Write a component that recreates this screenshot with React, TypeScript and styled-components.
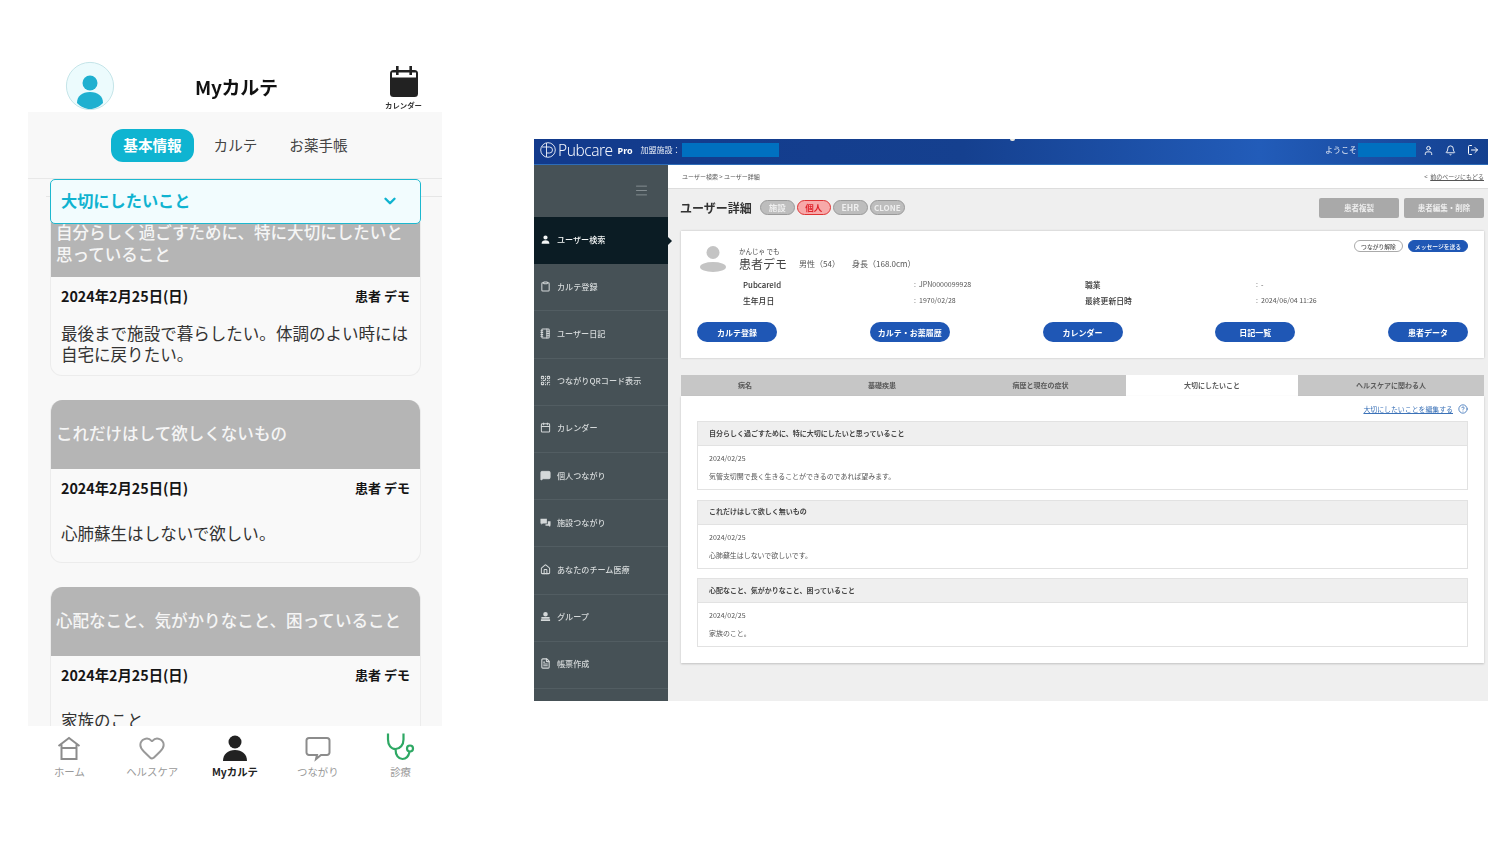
import React from "react";
import styled, { createGlobalStyle } from "styled-components";
import { Clipboard, NotebookTabs, QrCode, Calendar, MessageSquare, Home, User, Bell, LogOut, FileText, Heart, HelpCircle, Menu, ChevronDown } from "lucide-react";

const Global = createGlobalStyle`
  html, body { margin: 0; padding: 0; background: #fff; }
  body { font-family: "Noto Sans CJK JP", "Noto Sans", sans-serif; }
  * { box-sizing: border-box; }
`;

const Canvas = styled.div`
  width: 1510px; height: 853px; overflow: hidden; display: flex; align-items: flex-start;
  padding-left: 28px; gap: 92px;
`;

/* ---------- phone ---------- */
const Phone = styled.section`
  width: 414px; margin-top: 60px; display: flex; flex-direction: column; filter: blur(0.25px);
`;
const PhoneHeader = styled.header`
  height: 52px; display: flex; align-items: center; justify-content: space-between; padding: 0 20px 0 37px; position: relative;
`;
const PhoneTitle = styled.h1`
  position: absolute; left: 167px; top: 15px; margin: 0; font-size: 19px; line-height: 24px; font-weight: 700; color: #111; font-family: "Noto Sans CJK JP", sans-serif; letter-spacing: -0.3px;
`;
const CalendarBox = styled.div`
  display: flex; flex-direction: column; align-items: center; gap: 1px; padding-top: 4px;
  font-size: 7.4px; line-height: 12px; font-weight: 700; color: #333; white-space: nowrap;
`;
const PhoneBody = styled.div`
  height: 614px; background: #f8f8f8; overflow: hidden;
`;
const SegBar = styled.div`
  height: 67px; border-bottom: 1px solid #e8e8e8; display: flex; gap: 0; padding: 17px 0 0 83px; align-items: flex-start;
`;
const Seg = styled.div<{ $on?: boolean; $w: number }>`
  width: ${p => p.$w}px; height: 33px; border-radius: 12px; display: flex; align-items: center; justify-content: center; padding-bottom: 2px;
  font-size: 14.6px; font-weight: ${p => (p.$on ? 700 : 400)}; color: ${p => (p.$on ? "#fff" : "#444")};
  background: ${p => (p.$on ? "#0fb4d1" : "transparent")};
`;
const Scroll = styled.div`
  position: relative; padding: 0 21px 0 22px;
  &::before { content: ""; position: absolute; left: 18px; right: 0; top: 17px; height: 1px; background: #e6e6e6; }
`;
const Dropdown = styled.div`
  position: relative; height: 45px; background: #f2fcfe; border: 1.5px solid #1db8cf; border-radius: 5px;
  display: flex; align-items: center; justify-content: space-between; padding: 0 21px 3px 10px;
  font-size: 16.2px; font-weight: 700; color: #10b3d0; margin-bottom: -2px; z-index: 1;
  svg { margin-top: 2px; }
`;
const MCard = styled.article<{ $first?: boolean; $h: number }>`
  height: ${p => p.$h}px; border: 1px solid #ececec; border-top: 0; margin: 0 0 24px; background: #f9f9f9;
  border-radius: ${p => (p.$first ? "0 0 12px 12px" : "12px")}; overflow: hidden;
`;
const MHead = styled.div<{ $h: number; $first?: boolean }>`
  height: ${p => p.$h}px; background: #b5b5b5; color: #f5f5f5; font-size: 16.55px; line-height: 21.5px; font-weight: 500;
  display: flex; align-items: ${p => (p.$first ? "flex-start" : "center")}; padding: 0 4px 2px 5px;
`;
const MMeta = styled.div`
  display: flex; justify-content: space-between; align-items: center; padding: 10px 10px 0; line-height: 18px; font-weight: 700; color: #151515;
  font-family: "Noto Sans CJK JP", sans-serif; font-size: 14.3px;
`;
const MAuthor = styled.span`
  font-size: 13px;
`;
const MText = styled.p<{ $top: number }>`
  margin: ${p => p.$top}px 0 0; padding: 0 6px 0 10px; font-size: 16.55px; line-height: 21px; color: #333;
`;
const TabNav = styled.nav`
  height: 64px; display: grid; grid-template-columns: repeat(5, 1fr); background: #fff;
`;
const NavItem = styled.div<{ $on?: boolean }>`
  display: flex; flex-direction: column; align-items: center; padding-top: 8px; height: 64px;
  font-size: 10.4px; line-height: 14px; color: ${p => (p.$on ? "#222" : "#999")}; font-weight: ${p => (p.$on ? 700 : 400)}; white-space: nowrap;
  svg { height: 28px; margin-bottom: 3px; }
`;
const Stethoscope = styled.svg`
  && { margin-top: -1px; margin-bottom: 4px; }
`;

/* ---------- desktop ---------- */
const Desktop = styled.section`
  width: 954px; height: 562px; margin-top: 139px; display: flex; flex-direction: column; background: #efefef; filter: blur(0.3px);
`;
const TopBar = styled.header`
  height: 26px; flex: none; position: relative; display: flex; align-items: center; padding: 0 9px 3px 6px; color: #fff;
  background: linear-gradient(90deg, #123a8c 0%, #15408f 45%, #225cb9 76%, #14408f 100%);
  border-bottom: 1px solid #2d6cb8;
  &::after { content: ""; position: absolute; left: 476px; top: 0; width: 5px; height: 2px; border-radius: 0 0 3px 3px; background: #e8e8e0; }
`;
const Brand = styled.div`
  font-size: 15.5px; font-weight: 300; letter-spacing: -0.45px; margin: 0 5px 0 2px; line-height: 20px; font-family: "Noto Sans", sans-serif; color: #f2f5fb;
`;
const BrandPro = styled.span`
  font-size: 9px; font-weight: 700; font-family: "Noto Sans", sans-serif; margin-right: 8px;
`;
const TopLabel = styled.span`
  font-size: 8px; white-space: nowrap; color: #e6ebf5; padding-bottom: 1px;
`;
const Mask = styled.span<{ $w: number }>`
  width: ${p => p.$w}px; height: 14px; background: #0070c0; display: block; margin-left: 1px;
`;
const TopRight = styled.div`
  margin-left: auto; display: flex; align-items: center; gap: 0;
  svg { margin-left: 11px; }
  span + svg { margin-left: 7px; }
`;
const Split = styled.div`
  flex: 1; display: flex; min-height: 0;
`;
const Side = styled.aside`
  width: 134px; background: #465156; flex: none; display: flex; flex-direction: column;
`;
const Burger = styled.div`
  height: 52px; display: flex; align-items: center; justify-content: flex-end; padding: 0 19px 2px 0; color: #8d9699;
`;
const SideItem = styled.div<{ $on?: boolean }>`
  height: 47.2px; flex: none; position: relative; display: flex; align-items: center; gap: 6px; padding: 0 0 ${p => (p.$on ? 3 : 2)}px 6px;
  font-size: 8.1px; font-weight: 500; white-space: nowrap;
  color: ${p => (p.$on ? "#f4f6f6" : "#d4d8d9")};
  background: ${p => (p.$on ? "#0b1c24" : "transparent")};
  border-bottom: ${p => (p.$on ? "0" : "1px solid #525d62")};
  ${p => p.$on && `&::after { content: ""; position: absolute; right: -4px; top: 20px; border-left: 4px solid #0b1c24; border-top: 4px solid transparent; border-bottom: 4px solid transparent; }`}
  svg { width: 11px; height: 11px; flex: none; }
`;
const Main = styled.main`
  flex: 1; display: flex; flex-direction: column; min-width: 0;
`;
const Crumbs = styled.div`
  height: 24px; flex: none; background: #fff; border-bottom: 1px solid #ddd; display: flex; align-items: center; justify-content: space-between;
  padding: 0 4px 0 14px; font-size: 6px; color: #555;
`;
const BackLink = styled.span`
  text-decoration: underline;
`;
const Content = styled.div`
  padding: 0 4px 0 13px; display: flex; flex-direction: column;
`;
const TitleRow = styled.div`
  height: 42px; display: flex; align-items: center; padding-bottom: 5px;
`;
const PageTitle = styled.h2`
  margin: 0 8px 0 -1px; font-size: 12px; font-weight: 700; color: #333; line-height: 16px;
`;
const Badge = styled.span<{ $red?: boolean; $w: number; $size?: number }>`
  width: ${p => p.$w}px; height: 15px; border-radius: 8px; margin-right: 2px; display: flex; align-items: center; justify-content: center;
  font-size: ${p => p.$size ?? 8.5}px; font-weight: 700; font-family: "Noto Sans CJK JP", sans-serif; padding-bottom: 1px;
  color: ${p => (p.$red ? "#e0232b" : "#eee")}; background: ${p => (p.$red ? "#f7a9a9" : "#bdbdbd")}; border: 1px solid ${p => (p.$red ? "#d33" : "#9a9a9a")};
`;
const GreyBtn = styled.div<{ $gap?: boolean }>`
  width: 80px; height: 20px; border-radius: 2px; background: #a9a9a9; color: #eee; font-size: 7.5px; font-weight: 700; display: flex; align-items: center; justify-content: center;
  margin-left: ${p => (p.$gap ? "auto" : "5px")};
`;
const Card = styled.div`
  height: 127px; background: #fff; box-shadow: 0 0 2px rgba(0,0,0,.22); padding: 8px 16px 0; position: relative;
`;
const PersonRow = styled.div`
  height: 33px; display: flex; align-items: flex-end; padding-left: 3px;
`;
const NameBox = styled.div`
  margin-left: 13px; display: flex; flex-direction: column; color: #444; padding-bottom: 1px;
`;
const Kana = styled.span`
  font-size: 6.5px; line-height: 8px; margin-bottom: 1px;
`;
const Name = styled.span`
  font-size: 12px; line-height: 15px; color: #444;
`;
const Attr = styled.span<{ $w: number; $first?: boolean }>`
  font-size: 8px; line-height: 15px; color: #555; width: ${p => p.$w}px; white-space: nowrap; padding-bottom: 1px; height: 16px;
  margin-left: ${p => (p.$first ? "12px" : "0")};
`;
const Actions = styled.div`
  position: absolute; right: 16px; top: 9px; display: flex; gap: 5px;
`;
const SmallBtn = styled.span<{ $solid?: boolean; $w: number }>`
  width: ${p => p.$w}px; height: 12px; border-radius: 6px; font-size: 5.8px; display: flex; align-items: center; justify-content: center; font-weight: 500;
  color: ${p => (p.$solid ? "#fff" : "#555")}; background: ${p => (p.$solid ? "#1f57b5" : "#fff")}; border: 1px solid ${p => (p.$solid ? "#1f57b5" : "#aaa")};
`;
const InfoGrid = styled.dl`
  margin: 4px 0 0 46px; display: grid; grid-template-columns: 171px 171px 171px 1fr; grid-auto-rows: 16px; align-items: center;
`;
const Dt = styled.dt`
  font-size: 7.8px; font-weight: 500; color: #333;
`;
const Dd = styled.dd`
  margin: 0; font-size: 7px; color: #555;
`;
const BtnRow = styled.div`
  margin-top: 14px; display: flex; justify-content: space-between;
`;
const BlueBtn = styled.div`
  width: 80px; height: 20px; border-radius: 10px; background: #1f57b5; color: #fff; font-size: 8px; font-weight: 700; display: flex; align-items: center; justify-content: center;
`;
const Tabs = styled.div`
  margin-top: 17px; height: 21px; display: grid; grid-template-columns: 128px 146px 171px 172px 1fr; background: #c6c6c6;
`;
const TabCell = styled.div<{ $on?: boolean }>`
  display: flex; align-items: center; justify-content: center; font-size: 7px; font-weight: 700; color: #5a5a5a; padding-bottom: 1px;
  background: ${p => (p.$on ? "#fff" : "transparent")};
`;
const Panel = styled.div`
  background: #fff; height: 267px; padding: 0 16px; box-shadow: 0 1px 2px rgba(0,0,0,.2);
`;
const EditRow = styled.div`
  height: 25px; display: flex; align-items: center; justify-content: flex-end; gap: 5px; color: #3b72b8; font-size: 6.9px;
  span { text-decoration: underline; }
`;
const Section = styled.div`
  border: 1px solid #e2e2e2; height: 69px; margin-bottom: 9.5px; display: flex; flex-direction: column;
`;
const SecHead = styled.div`
  height: 24px; flex: none; background: #efefef; border-bottom: 1px solid #e2e2e2; display: flex; align-items: center; padding: 0 0 2px 11px; font-size: 7px; font-weight: 700; color: #444;
`;
const SecDate = styled.div`
  padding: 8px 0 0 11px; font-size: 7px; line-height: 9px; color: #555;
`;
const SecText = styled.div`
  padding: 9px 0 0 11px; font-size: 6.95px; line-height: 9px; color: #555;
`;

const Solid = ({ d }: { d: string }) => (
  <svg viewBox="0 0 24 24" fill="currentColor"><path d={d} /></svg>
);
const personD = "M12 3a4.6 4.6 0 1 1 0 9.2A4.6 4.6 0 0 1 12 3zM3.5 21c0-4.8 3.8-7.2 8.5-7.2s8.5 2.4 8.5 7.2z";

const sideItems: [string, React.ReactNode][] = [
  ["カルテ登録", <Clipboard strokeWidth={2.2} />],
  ["ユーザー日記", <NotebookTabs strokeWidth={2.2} />],
  ["つながりQRコード表示", <QrCode strokeWidth={2.2} />],
  ["カレンダー", <Calendar strokeWidth={2.2} />],
  ["個人つながり", <MessageSquare fill="currentColor" />],
  ["施設つながり", <Solid d="M1 4h14v10H6l-3 3v-3H1zM17 9h6v10h-1v3l-3-3h-7v-3h5z" />],
  ["あなたのチーム医療", <Home strokeWidth={2.2} />],
  ["グループ", <Solid d="M12 2a5 5 0 1 1 0 10 5 5 0 0 1 0-10zM3 13h18v4H3zM2 18h20v4H2z" />],
  ["帳票作成", <FileText strokeWidth={2.4} />],
];

const mobileCards = [
  { h: 154, head: 55, first: true, title: "自分らしく過ごすために、特に大切にしたいと思っていること", text: "最後まで施設で暮らしたい。体調のよい時には自宅に戻りたい。", top: 18 },
  { h: 163, head: 69, title: "これだけはして欲しくないもの", text: "心肺蘇生はしないで欲しい。", top: 26 },
  { h: 163, head: 69, title: "心配なこと、気がかりなこと、困っていること", text: "家族のこと", top: 26 },
];

const records = [
  ["自分らしく過ごすために、特に大切にしたいと思っていること", "気管支切開で長く生きることができるのであれば望みます。"],
  ["これだけはして欲しく無いもの", "心肺蘇生はしないで欲しいです。"],
  ["心配なこと、気がかりなこと、困っていること", "家族のこと。"],
];

export default function App() {
  return (
    <>
      <Global />
      <Canvas>
        <Phone>
          <PhoneHeader>
            <svg width="50" height="50" viewBox="0 0 50 50">
              <circle cx="25" cy="25" r="23.6" fill="#ecfbfd" stroke="#c4e4e8" />
              <circle cx="25" cy="22" r="7.5" fill="#1fb0d0" />
              <path d="M12 42c0-7 5-11 13-11s13 4 13 11c-3.500 3.500-8 6-13 6s-9.500-2.500-13-6z" fill="#1fb0d0" />
            </svg>
            <PhoneTitle>Myカルテ</PhoneTitle>
            <CalendarBox>
              <svg width="32" height="33" viewBox="0 0 32 33">
                <rect x="2" y="5" width="28" height="27" rx="3.500" fill="#222" />
                <rect x="4" y="7.500" width="24" height="5" fill="#fff" />
                <rect x="8" y="1" width="2.600" height="9" fill="#222" />
                <rect x="21.400" y="1" width="2.600" height="9" fill="#222" />
              </svg>
              カレンダー
            </CalendarBox>
          </PhoneHeader>
          <PhoneBody>
            <SegBar>
              <Seg $on $w={83}>基本情報</Seg>
              <Seg $w={83}>カルテ</Seg>
              <Seg $w={83}>お薬手帳</Seg>
            </SegBar>
            <Scroll>
              <Dropdown>
                大切にしたいこと
                <ChevronDown size={18} strokeWidth={3.2} color="#10b3d0" />
              </Dropdown>
              {mobileCards.map(c => (
                <MCard key={c.title} $h={c.h} $first={c.first}>
                  <MHead $h={c.head} $first={c.first}>{c.title}</MHead>
                  <MMeta><span>2024年2月25日(日)</span><MAuthor>患者 デモ</MAuthor></MMeta>
                  <MText $top={c.top}>{c.text}</MText>
                </MCard>
              ))}
            </Scroll>
          </PhoneBody>
          <TabNav>
            <NavItem>
              <svg width="24" viewBox="0 0 24 28" fill="none" stroke="#8c8c8c" strokeWidth="2"><path d="M1.500 12 12 4l10.500 8M4.500 10.500V25h15V10.500M4.500 14h15" /></svg>
              ホーム
            </NavItem>
            <NavItem>
              <Heart width={30} color="#999" strokeWidth={1.7} />
              ヘルスケア
            </NavItem>
            <NavItem $on>
              <svg width="26" viewBox="0 0 26 28" fill="#222"><circle cx="13" cy="8" r="6.500" /><path d="M1 27c0-7 5-11 12-11s12 4 12 11z" /></svg>
              Myカルテ
            </NavItem>
            <NavItem>
              <svg width="26" viewBox="0 0 26 28" fill="none" stroke="#8c8c8c" strokeWidth="2"><path d="M4 4h18a2.500 2.500 0 0 1 2.500 2.500v12A2.500 2.500 0 0 1 22 21h-6l-5 4 1-4H4a2.500 2.500 0 0 1-2.500-2.500v-12A2.500 2.500 0 0 1 4 4z" /></svg>
              つながり
            </NavItem>
            <NavItem>
              <Stethoscope width="29" viewBox="0 0 29 28" fill="none" stroke="#2ea864" strokeWidth="2.200">
                <path d="M2 0.500v6c0 5.500 3 9.500 7.500 9.500S17.500 12 17.500 6.500v-6" />
                <path d="M9.500 16c0 6.500 3 10 7 10s6-2.500 7-7" />
                <circle cx="24" cy="15.500" r="3" />
              </Stethoscope>
              診療
            </NavItem>
          </TabNav>
        </Phone>

        <Desktop>
          <TopBar>
            <svg width="16" height="16" viewBox="0 0 16 16" fill="none" stroke="#f0f4fb" strokeWidth="0.9"><circle cx="8" cy="8" r="7.300" /><path d="M6.500 1v14M2 5h7.500a3 3 0 0 1 0 6H6.500" /></svg>
            <Brand>Pubcare</Brand>
            <BrandPro>Pro</BrandPro>
            <TopLabel>加盟施設：</TopLabel>
            <Mask $w={97} />
            <TopRight>
              <TopLabel>ようこそ</TopLabel>
              <Mask $w={58} />
              <User size={11} />
              <Bell size={11} />
              <LogOut size={12} />
            </TopRight>
          </TopBar>
          <Split>
            <Side>
              <Burger><Menu size={15} strokeWidth={1.4} /></Burger>
              <SideItem $on><Solid d={personD} />ユーザー検索</SideItem>
              {sideItems.map(([label, icon]) => (
                <SideItem key={label}>{icon}{label}</SideItem>
              ))}
            </Side>
            <Main>
              <Crumbs>
                <span>ユーザー検索 &gt; ユーザー詳細</span>
                <span>&lt;&nbsp;&nbsp;<BackLink>前のページにもどる</BackLink></span>
              </Crumbs>
              <Content>
                <TitleRow>
                  <PageTitle>ユーザー詳細</PageTitle>
                  <Badge $w={35}>施設</Badge>
                  <Badge $w={34} $red>個人</Badge>
                  <Badge $w={35}>EHR</Badge>
                  <Badge $w={35} $size={8}>CLONE</Badge>
                  <GreyBtn $gap>患者複製</GreyBtn>
                  <GreyBtn>患者編集・削除</GreyBtn>
                </TitleRow>
                <Card>
                  <PersonRow>
                    <svg width="26" height="27" viewBox="0 0 26 27" fill="#c4c4c4"><circle cx="13" cy="7.500" r="6.500" /><ellipse cx="13" cy="22" rx="13" ry="5" /></svg>
                    <NameBox>
                      <Kana>かんじゃ でも</Kana>
                      <Name>患者デモ</Name>
                    </NameBox>
                    <Attr $w={53} $first>男性（54）</Attr>
                    <Attr $w={70}>身長（168.0cm）</Attr>
                  </PersonRow>
                  <Actions>
                    <SmallBtn $w={49}>つながり解除</SmallBtn>
                    <SmallBtn $w={60} $solid>メッセージを送る</SmallBtn>
                  </Actions>
                  <InfoGrid>
                    <Dt>PubcareId</Dt><Dd>:&nbsp;&nbsp;JPN0000099928</Dd>
                    <Dt>職業</Dt><Dd>:&nbsp;&nbsp;-</Dd>
                    <Dt>生年月日</Dt><Dd>:&nbsp;&nbsp;1970/02/28</Dd>
                    <Dt>最終更新日時</Dt><Dd>:&nbsp;&nbsp;2024/06/04 11:26</Dd>
                  </InfoGrid>
                  <BtnRow>
                    <BlueBtn>カルテ登録</BlueBtn>
                    <BlueBtn>カルテ・お薬履歴</BlueBtn>
                    <BlueBtn>カレンダー</BlueBtn>
                    <BlueBtn>日記一覧</BlueBtn>
                    <BlueBtn>患者データ</BlueBtn>
                  </BtnRow>
                </Card>
                <Tabs>
                  <TabCell>病名</TabCell>
                  <TabCell>基礎疾患</TabCell>
                  <TabCell>病歴と現在の症状</TabCell>
                  <TabCell $on>大切にしたいこと</TabCell>
                  <TabCell>ヘルスケアに関わる人</TabCell>
                </Tabs>
                <Panel>
                  <EditRow><span>大切にしたいことを編集する</span><HelpCircle size={10} /></EditRow>
                  {records.map(([h, t]) => (
                    <Section key={h}>
                      <SecHead>{h}</SecHead>
                      <SecDate>2024/02/25</SecDate>
                      <SecText>{t}</SecText>
                    </Section>
                  ))}
                </Panel>
              </Content>
            </Main>
          </Split>
        </Desktop>
      </Canvas>
    </>
  );
}
